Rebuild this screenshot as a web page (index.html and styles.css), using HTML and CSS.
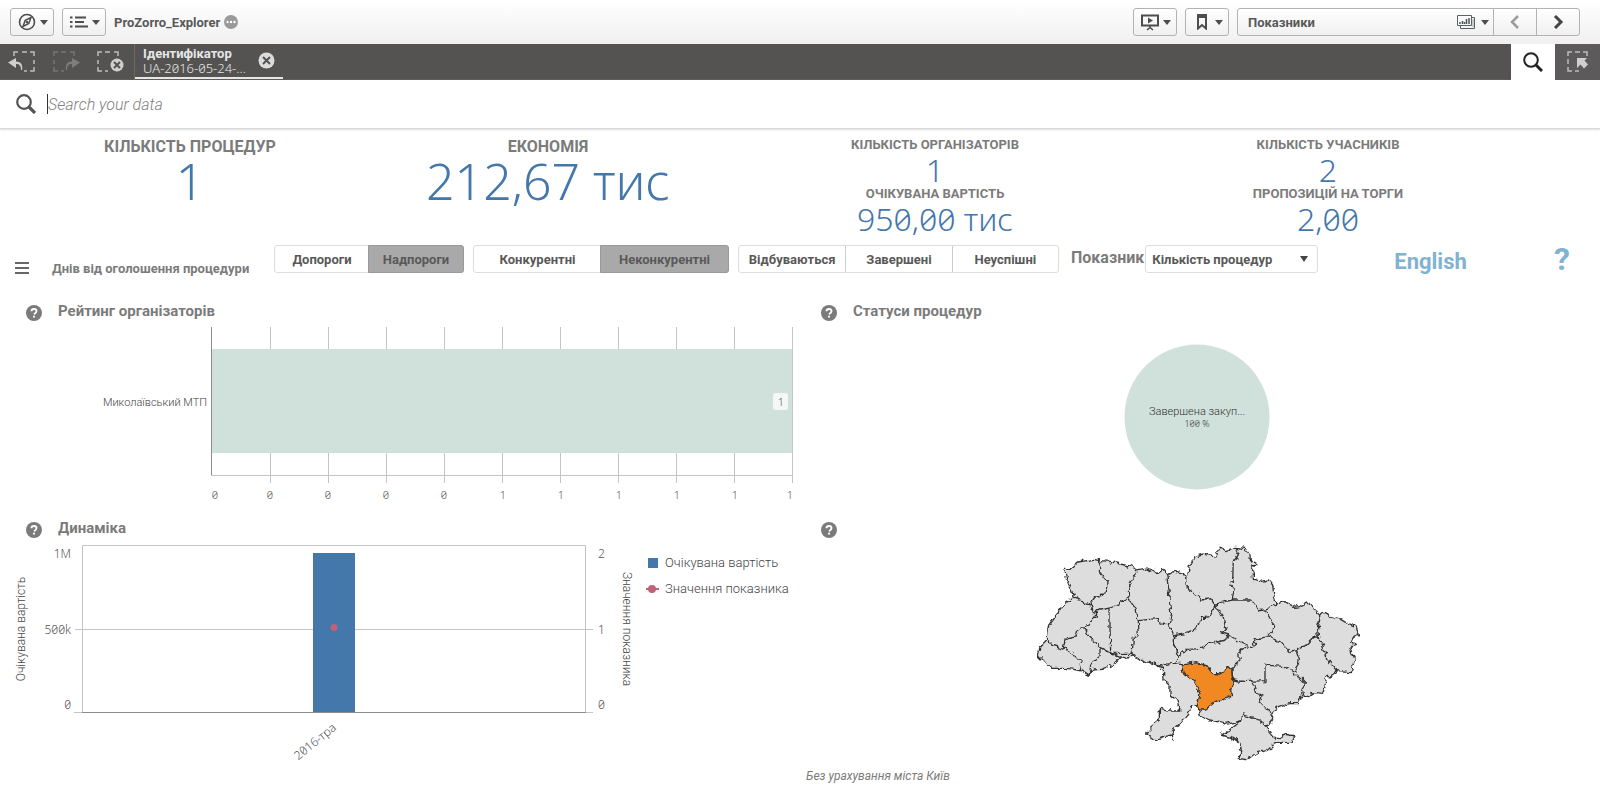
FILE: index.html
```html
<!DOCTYPE html>
<html lang="uk">
<head>
<meta charset="utf-8">
<title>ProZorro_Explorer</title>
<link rel="stylesheet" href="styles.css">
</head>
<body>
<header class="topbar">
  <button class="tool" aria-label="Навігація">
    <svg width="18" height="18" viewBox="0 0 18 18"><circle cx="9" cy="9" r="7.5" fill="none" stroke="#4d4d4d" stroke-width="1.6"/><path d="M13 4.500 10.800 10.500 5 13.500 7.200 7.300Z" fill="none" stroke="#4d4d4d" stroke-width="1.5"/><circle cx="9" cy="9" r="1.300" fill="#4d4d4d"/></svg>
    <span class="caret"></span>
  </button>
  <button class="tool" aria-label="Меню">
    <svg width="18" height="14" viewBox="0 0 18 14"><path d="M5 2.500H16M5 7H14M5 11.500H18" stroke="#4d4d4d" stroke-width="2"/><path d="M0 2.500H2.500M0 7H2.500M0 11.500H2.500" stroke="#4d4d4d" stroke-width="2"/></svg>
    <span class="caret"></span>
  </button>
  <h1 class="app-name">ProZorro_Explorer</h1>
  <button class="more" aria-label="Деталі"><svg width="14" height="14" viewBox="0 0 14 14"><circle cx="7" cy="7" r="7" fill="#9a9a9a"/><circle cx="3.500" cy="7" r="1.200" fill="#fff"/><circle cx="7" cy="7" r="1.200" fill="#fff"/><circle cx="10.500" cy="7" r="1.200" fill="#fff"/></svg></button>
  <div class="topbar-right">
    <button class="tool" aria-label="Історії">
      <svg width="18" height="17" viewBox="0 0 18 17"><path d="M1 1.500H17V11.500H1Z" fill="none" stroke="#4d4d4d" stroke-width="2"/><path d="M7 3.500 12 6.500 7 9.500Z" fill="#4d4d4d"/><path d="M9 12V14M6 16 9 13.500 12 16" fill="none" stroke="#4d4d4d" stroke-width="1.600"/></svg>
      <span class="caret"></span>
    </button>
    <button class="tool" aria-label="Закладки">
      <svg width="18" height="16" viewBox="0 0 18 16"><path d="M5 1H13V14.500L9 11 5 14.500Z" fill="none" stroke="#4d4d4d" stroke-width="2"/><path d="M5 1H13V4H5Z" fill="#4d4d4d"/></svg>
      <span class="caret"></span>
    </button>
    <div class="sheet-nav">
      <button class="sheet">
        <span>Показники</span>
        <svg width="18" height="14" viewBox="0 0 18 14"><path d="M.5.500H14.500V10.500H.5ZM14.500 2.500H17.500V13.500H3.500V10.500" fill="none" stroke="#5b6266"/><path d="M16 4V12" stroke="#8da6a6"/><path d="M3 9V7M5.500 9V6M7.500 9V7M9.500 9V4M12 9V3" stroke="#4d5a50" stroke-width="1.500"/></svg>
        <span class="caret"></span>
      </button>
      <button class="step" aria-label="Попередній аркуш" disabled><svg width="12" height="14" viewBox="0 0 12 14"><path d="M9 1 3 7 9 13" fill="none" stroke="#9c9c9c" stroke-width="2.500"/></svg></button>
      <button class="step" aria-label="Наступний аркуш"><svg width="12" height="14" viewBox="0 0 12 14"><path d="M3 1 9 7 3 13" fill="none" stroke="#444" stroke-width="3"/></svg></button>
    </div>
  </div>
</header>

<div class="selections">
  <div class="sel-tools">
    <button aria-label="Крок назад"><svg width="28" height="22" viewBox="0 0 28 22"><path d="M6 5V1H10M14 1H19M22 1H26V5M26 9V13M26 16V20H22M19 20H16" fill="none" stroke="#bdbdbd" stroke-width="1.500"/><path d="M13 19C13 14 11 13 8 13V17L0 11.500 8 7V10.500C13 10.500 15 14 14 19Z" fill="#cfcfcf"/></svg></button>
    <button aria-label="Крок уперед" disabled><svg width="28" height="22" viewBox="0 0 28 22"><path d="M2 5V1H6M9 1H14M18 1H22V5M2 9V13M2 16V20H6M9 20H12" fill="none" stroke="#777" stroke-width="1.500"/><path d="M15 19C15 14 17 13 20 13V17L28 11.500 20 7V10.500C15 10.500 13 14 14 19Z" fill="#7d7d7d"/></svg></button>
    <button aria-label="Очистити всі"><svg width="28" height="22" viewBox="0 0 28 22"><path d="M2 5V1H6M9 1H14M18 1H22V5M2 9V13M2 16V20H6M9 20H12" fill="none" stroke="#bdbdbd" stroke-width="1.500"/><circle cx="21" cy="14" r="6.500" fill="#cfcfcf"/><path d="M18 11 24 17M24 11 18 17" stroke="#545352" stroke-width="2"/></svg></button>
  </div>
  <div class="sel-item">
    <div class="sel-text"><strong>Ідентифікатор</strong><span class="num">UA-2016-05-24-...</span></div>
    <button aria-label="Очистити вибір"><svg width="17" height="17" viewBox="0 0 17 17"><circle cx="8.500" cy="8.500" r="8" fill="#dcdcdc"/><path d="M5 5 12 12M12 5 5 12" stroke="#545352" stroke-width="2"/></svg></button>
  </div>
  <button class="sel-search" aria-label="Пошук"><svg width="20" height="20" viewBox="0 0 20 20"><circle cx="8" cy="8" r="6.800" fill="none" stroke="#222" stroke-width="2"/><path d="M12.500 12.500 19 19" stroke="#222" stroke-width="3"/></svg></button>
  <button class="sel-mode" aria-label="Інструмент вибору"><svg width="22" height="22" viewBox="0 0 22 22"><path d="M1 5V1H5M8 1H13M16 1H20V5M1 8V13M1 16V20H5M8 20H12" fill="none" stroke="#bdbdbd" stroke-width="1.500"/><path d="M10 7H20L17.500 9.500 21 13.500 17 17.500 13.500 13.500 10 17Z" fill="#cfcfcf"/></svg></button>
</div>

<form class="search" role="search">
  <label for="q"><svg width="20" height="20" viewBox="0 0 20 20"><circle cx="8" cy="8" r="6.800" fill="none" stroke="#555" stroke-width="2.200"/><path d="M12.500 12.500 19 19" stroke="#555" stroke-width="3.200"/></svg></label>
  <input id="q" type="text" placeholder="Search your data" aria-label="Search your data">
</form>

<main>
  <section class="kpis">
    <div class="kpi big"><h2>КІЛЬКІСТЬ ПРОЦЕДУР</h2><p>1</p></div>
    <div class="kpi big"><h2>ЕКОНОМІЯ</h2><p>212,67 тис</p></div>
    <div class="kpi"><h2>КІЛЬКІСТЬ ОРГАНІЗАТОРІВ</h2><p>1</p><h2>ОЧІКУВАНА ВАРТІСТЬ</h2><p>950,00 тис</p></div>
    <div class="kpi"><h2>КІЛЬКІСТЬ УЧАСНИКІВ</h2><p>2</p><h2>ПРОПОЗИЦІЙ НА ТОРГИ</h2><p>2,00</p></div>
  </section>

  <section class="filters">
    <button class="days"><svg width="14" height="14" viewBox="0 0 14 14"><path d="M0 2H14M0 7H14M0 12H14" stroke="#666" stroke-width="2"/></svg><span>Днів від оголошення процедури</span></button>
    <div class="group two-narrow"><button>Допороги</button><button class="on">Надпороги</button></div>
    <div class="group two-wide"><button>Конкурентні</button><button class="on">Неконкурентні</button></div>
    <div class="group three"><button>Відбуваються</button><button>Завершені</button><button>Неуспішні</button></div>
    <label class="measure-label" for="measure">Показник</label>
    <div class="measure"><select id="measure"><option>Кількість процедур</option></select><span class="arrow"></span></div>
    <a class="lang" href="#en">English</a>
    <a class="help" href="#help">?</a>
  </section>

  <section class="panels">
    <article class="panel">
      <header><svg class="q" viewBox="0 0 16 16"><circle cx="8" cy="8" r="8" fill="#7b7b7b"/><path d="M5.500 6.300Q5.500 4 8 4T10.500 6.200Q10.500 7.500 8 9.200" fill="none" stroke="#fff" stroke-width="1.900"/><path d="M7 10.800H9V12.600H7Z" fill="#fff"/></svg><h3>Рейтинг організаторів</h3></header>
      <svg class="chart" viewBox="0 0 816 190">
        <path class="grid-line" d="M270.500 2V158M328.500 2V158M386.500 2V158M444.500 2V158M502.500 2V158M560.500 2V158M618.500 2V158M676.500 2V158M734.500 2V158M792.500 2V158M211 150.500H793"/>
        <path fill="#d0e1db" d="M212 24H792V128H212Z"/>
        <path class="axis-line" d="M211.500 2V150"/>
        <rect x="773" y="68" width="15" height="17" rx="3" fill="#f3f7f5"/>
        <g class="tick small" text-anchor="middle"><text x="781" y="81">1</text><text x="215" y="174">0</text><text x="270" y="174">0</text><text x="328" y="174">0</text><text x="386" y="174">0</text><text x="444" y="174">0</text><text x="503" y="174">1</text><text x="561" y="174">1</text><text x="619" y="174">1</text><text x="677" y="174">1</text><text x="735" y="174">1</text><text x="790" y="174">1</text></g>
        <text class="label small" x="207" y="81" text-anchor="end">Миколаївський МТП</text>
      </svg>
    </article>

    <article class="panel right">
      <header><svg class="q" viewBox="0 0 16 16"><circle cx="8" cy="8" r="8" fill="#7b7b7b"/><path d="M5.500 6.300Q5.500 4 8 4T10.500 6.200Q10.500 7.500 8 9.200" fill="none" stroke="#fff" stroke-width="1.900"/><path d="M7 10.800H9V12.600H7Z" fill="#fff"/></svg><h3>Статуси процедур</h3></header>
      <svg class="pie" viewBox="0 0 146 146">
        <circle cx="73" cy="73" r="72.500" fill="#d0e1db"/>
        <text class="label dark small" x="73" y="71" text-anchor="middle">Завершена закуп...</text>
        <text class="tick dark tiny" x="73" y="83" text-anchor="middle">100 %</text>
      </svg>
    </article>

    <article class="panel">
      <header><svg class="q" viewBox="0 0 16 16"><circle cx="8" cy="8" r="8" fill="#7b7b7b"/><path d="M5.500 6.300Q5.500 4 8 4T10.500 6.200Q10.500 7.500 8 9.200" fill="none" stroke="#fff" stroke-width="1.900"/><path d="M7 10.800H9V12.600H7Z" fill="#fff"/></svg><h3>Динаміка</h3></header>
      <svg class="chart" viewBox="0 0 816 220">
        <path class="grid-line" d="M82.500 169V2.500H585.500V169M75 86.500H593M74 169.500H82M585 169.500H593"/>
        <path fill="#4477aa" d="M313 10H355V169H313Z"/>
        <path class="axis-line" d="M82 169.500H586"/>
        <circle cx="334" cy="84.500" r="3.500" fill="#c0627a"/>
        <g class="tick" text-anchor="end"><text x="71" y="15">1M</text><text x="71" y="91">500k</text><text x="71" y="166">0</text></g>
        <g class="tick"><text x="598" y="15">2</text><text x="598" y="91">1</text><text x="598" y="166">0</text></g>
        <text class="label" transform="translate(25 86) rotate(-90)" text-anchor="middle">Очікувана вартість</text>
        <text class="label" transform="translate(623 86) rotate(90)" text-anchor="middle">Значення показника</text>
        <text class="tick" transform="translate(337 186) rotate(-39)" text-anchor="end">2016-тра</text>
        <path fill="#4477aa" d="M648 15H658V25H648Z"/>
        <path d="M646 46H659" stroke="#c0627a" stroke-width="2"/><circle cx="652" cy="46" r="4" fill="#c0627a"/>
        <text class="legend" x="665" y="24">Очікувана вартість</text>
        <text class="legend" x="665" y="50">Значення показника</text>
      </svg>
    </article>

    <article class="panel right">
      <header><svg class="q" viewBox="0 0 16 16"><circle cx="8" cy="8" r="8" fill="#7b7b7b"/><path d="M5.500 6.300Q5.500 4 8 4T10.500 6.200Q10.500 7.500 8 9.200" fill="none" stroke="#fff" stroke-width="1.900"/><path d="M7 10.800H9V12.600H7Z" fill="#fff"/></svg></header>
      <svg class="map" viewBox="0 39 990 660" role="img" aria-label="Мапа областей України">
        <defs><filter id="rough" x="-5%" y="-5%" width="110%" height="110%"><feTurbulence type="fractalNoise" baseFrequency="0.06" numOctaves="2" seed="4"/><feDisplacementMap in="SourceGraphic" scale="20" xChannelSelector="R" yChannelSelector="G"/></filter></defs>
        <g class="regions" filter="url(#rough)">
          <path class="land" d="M104 114 118 120 145 96 190 88 212 92 240 95 270 102 296 108 322 120 345 115 360 125 375 118 385 130 400 118 410 134 440 126 460 130 470 145 478 110 495 80 520 72 555 78 568 55 590 62 615 52 645 55 660 78 662 92 678 102 663 112 670 130 670 148 695 154 715 150 728 165 732 200 740 222 765 215 795 232 840 217 850 238 872 258 882 247 900 258 930 266 950 278 978 290 985 312 968 325 962 338 976 346 960 352 965 370 973 385 965 428 922 425 910 432 888 448 885 470 878 490 855 488 835 500 818 495 805 518 778 518 745 530 725 545 732 560 718 588 705 590 735 625 755 625 760 612 795 618 782 640 745 640 730 645 710 662 680 668 650 690 625 685 635 668 630 640 610 625 575 615 595 602 635 572 590 583 540 570 515 560 508 540 503 522 485 530 478 548 455 575 425 605 430 630 425 615 400 620 375 630 350 612 362 598 375 575 388 565 388 535 420 540 450 540 440 510 420 495 420 468 402 450 400 415 385 405 350 395 310 378 272 384 250 405 215 418 190 420 175 435 155 422 110 415 65 415 45 400 25 378 30 350 52 328 55 290 80 255 105 220 130 204 125 180 110 150Z"/>
          <path d="M212 92 208 125 232 155 225 195 195 198 183 215 185 228M130 204 155 212 168 225 185 228 190 248 200 243 240 234 262 225 295 203M322 120 305 150 295 180 297 205 318 235 325 275 328 315 310 325 306 370M240 234V290L242 370M200 243 198 262 165 290 175 320 210 352 242 370 306 370 310 378M165 290 148 292 140 320 105 328 100 355M52 328 65 345 100 355 130 372 150 395 155 422M210 352V382L185 400 175 435M242 370 270 382M325 272 385 265 390 282 412 284M410 134 415 170 422 215 425 250 415 285 430 318V340L445 378 435 400 385 405M435 400 457 405M430 318 475 308 500 295 515 262 530 262 542 255 555 228M470 145 472 175 500 195 515 210 542 203 555 228M445 378 475 358 510 355 535 342 588 330 595 315"/>
          <path transform="translate(510 0)" d="M105 52 115 75 100 95 98 150 90 165 102 180 97 210M45 228 60 218 97 210 155 210 175 240 205 235 230 222M195 240 222 285 215 305 200 320M45 228 70 262 78 300 65 308 85 315 135 345 160 355 165 330 200 320M135 350 120 365 120 390 95 410 97 430 100 450M200 320 240 335 270 368 290 362 290 355 320 345 345 318 355 318M362 258 352 290 355 318 370 350 380 385 412 425M290 362 298 385 295 405 282 425 255 410 195 405 195 452M282 430 305 450 316 462 305 480 308 495M100 450 135 455 195 452M160 458 170 490 185 500 180 515 210 545M125 572 128 555 160 565 185 572 195 590"/>
          <path class="picked" d="M457 405 500 398 532 408 545 430 570 432 590 420 605 412 607 440 610 455 602 480 605 498 580 508 555 515 525 540 505 540 503 522 510 490 500 475 492 450 470 440 462 425Z"/>
        </g>
      </svg>
    </article>
  </section>
  <p class="footnote">Без урахування міста Київ</p>
</main>
</body>
</html>
```
FILE: styles.css
```css
* { box-sizing: border-box; }
body { margin: 0; background: #fff; color: #595959; font-family: Roboto, "Noto Sans", sans-serif; font-size: 13px; }
h1, h2, h3, p { margin: 0; }
button, input, select { font: inherit; color: inherit; margin: 0; }
button { padding: 0; border: 0; background: none; cursor: pointer; }
svg { display: block; flex: none; }
.num, .tick, .kpi p { font-family: "Noto Sans", sans-serif; font-variant-numeric: slashed-zero; }

.topbar { display: flex; align-items: center; height: 44px; padding: 0 20px 0 10px; background: linear-gradient(#fff, #f0f0f0); }
.tool { display: flex; align-items: center; justify-content: space-between; width: 44px; height: 28px; padding: 0 5px 0 7px; margin-right: 8px; border: 1px solid #b3b3b3; border-radius: 3px; background: linear-gradient(#fff, #f0f0f0); }
.caret { border: 4px solid transparent; border-top: 5px solid #4d4d4d; border-bottom: 0; }
.app-name { font-size: 13px; font-weight: 700; }
.more { margin-left: 4px; }
.topbar-right { display: flex; margin-left: auto; }
.sheet-nav { display: flex; height: 28px; border: 1px solid #b3b3b3; border-radius: 3px; background: linear-gradient(#fff, #f0f0f0); }
.sheet { display: flex; align-items: center; gap: 6px; width: 255px; padding: 0 4px 0 10px; font-weight: 700; }
.sheet span:first-child { margin-right: auto; }
.step { display: flex; align-items: center; justify-content: center; width: 43px; border-left: 1px solid #b3b3b3; }

.selections { display: flex; height: 36px; background: #545352; }
.sel-tools { display: flex; align-items: center; gap: 16px; width: 135px; padding-left: 8px; border-right: 1px solid #6b6a69; }
.sel-item { display: flex; align-items: center; justify-content: space-between; width: 148px; padding: 0 8px 0 8px; border-bottom: 2px solid #e6e6e6; margin-bottom: 1px; color: #e6e6e6; }
.sel-text { display: grid; line-height: 14px; }
.sel-text .num { font-size: 13px; font-weight: 300; }
.sel-search, .sel-mode { display: grid; place-items: center; width: 44px; }
.sel-search { margin-left: auto; background: #fff; }
.sel-mode { width: 45px; background: #5c5a5a; }

.search { display: flex; align-items: center; height: 49px; padding-left: 16px; border-bottom: 1px solid #d9d9d9; box-shadow: 0 1px 2px #ddd; }
.search input { flex: 1; height: 20px; margin-left: 11px; padding: 0; border: 0; border-left: 1px solid #333; outline: 0; background: none; font-size: 16px; font-style: italic; font-weight: 300; }
.search input::placeholder { color: #808080; opacity: 1; }

.kpis { display: grid; grid-template-columns: 380fr 336fr 438fr 348fr 98fr; height: 116px; padding-top: 8px; text-align: center; }
.kpi h2 { color: #7b7b7b; font-size: 13px; line-height: 16px; font-weight: 700; }
.kpi p { color: #4477aa; font-size: 32px; line-height: 33px; font-weight: 300; }
.kpi.big h2 { font-size: 16px; line-height: 20px; }
.kpi.big p { font-size: 50px; line-height: 48px; }

.filters { display: flex; gap: 9px; height: 53px; font-weight: 700; }
.days { display: flex; align-items: center; gap: 23px; width: 265px; height: 46px; padding-left: 15px; color: #7b7b7b; font-weight: 700; white-space: nowrap; }
.group { display: grid; height: 28px; border: 1px solid #ddd; border-radius: 3px; }
.group button { font-weight: 700; }
.group button + button { border-left: 1px solid #ccc; }
.group .on { margin: -1px; border: 1px solid #999; border-radius: 0 3px 3px 0; background: #a9a9a9; }
.two-narrow { grid-template-columns: 1fr 1fr; width: 190px; }
.two-wide { grid-template-columns: 1fr 1fr; width: 256px; }
.three { grid-template-columns: 1fr 1fr 1fr; width: 321px; }
.measure-label { margin: 0 -8px 0 3px; color: #7b7b7b; font-size: 16px; line-height: 26px; }
.measure { display: grid; align-items: center; width: 173px; height: 28px; }
.measure select, .arrow { grid-area: 1 / 1; }
.measure select { appearance: none; height: 28px; padding: 0 6px; border: 1px solid #ddd; border-radius: 3px; background: #fff; font-weight: 700; }
.arrow { justify-self: end; margin-right: 10px; border: 4px solid transparent; border-top: 6px solid #444; border-bottom: 0; pointer-events: none; }
.filters a { color: #7fb3d1; text-decoration: none; }
.lang { margin-left: 67px; font-size: 22px; line-height: 34px; }
.help { margin: 0 30px 0 auto; font-size: 32px; line-height: 28px; }

.panels { display: grid; grid-template-columns: 51fr 49fr; }
.panel header { display: flex; align-items: center; gap: 16px; height: 28px; padding: 2px 0 0 26px; }
.panel:nth-child(-n+2) header { height: 27px; }
.panel.right header { padding-left: 5px; }
.panel h3 { color: #7b7b7b; font-size: 15px; line-height: 18px; padding-bottom: 4px; }
.q { width: 16px; height: 16px; }
.chart { width: 100%; overflow: visible; }
.pie, .map { margin: 0 auto; }
.pie { width: 146px; margin-top: 19px; transform: translateX(-11px); }
.map { width: 330px; transform: translateX(-13px); }
.grid-line { fill: none; stroke: #c4c4c4; }
.axis-line { fill: none; stroke: #8c8c8c; }
.tick { fill: #555; font-size: 12px; font-weight: 300; }
.label { fill: #444; font-size: 12px; font-weight: 300; }
.legend { fill: #444; font-size: 13px; font-weight: 300; }
.small { font-size: 11px; }
.tiny { font-size: 9px; }
.dark { fill: #333; }
.regions path { fill: none; stroke: #333; stroke-width: 4; stroke-linejoin: round; }
.regions .land { fill: #ddd; }
.regions .picked { fill: #f28820; }
.footnote { margin-left: 806px; color: #7b7b7b; font-size: 12px; line-height: 26px; font-style: italic; }
```
